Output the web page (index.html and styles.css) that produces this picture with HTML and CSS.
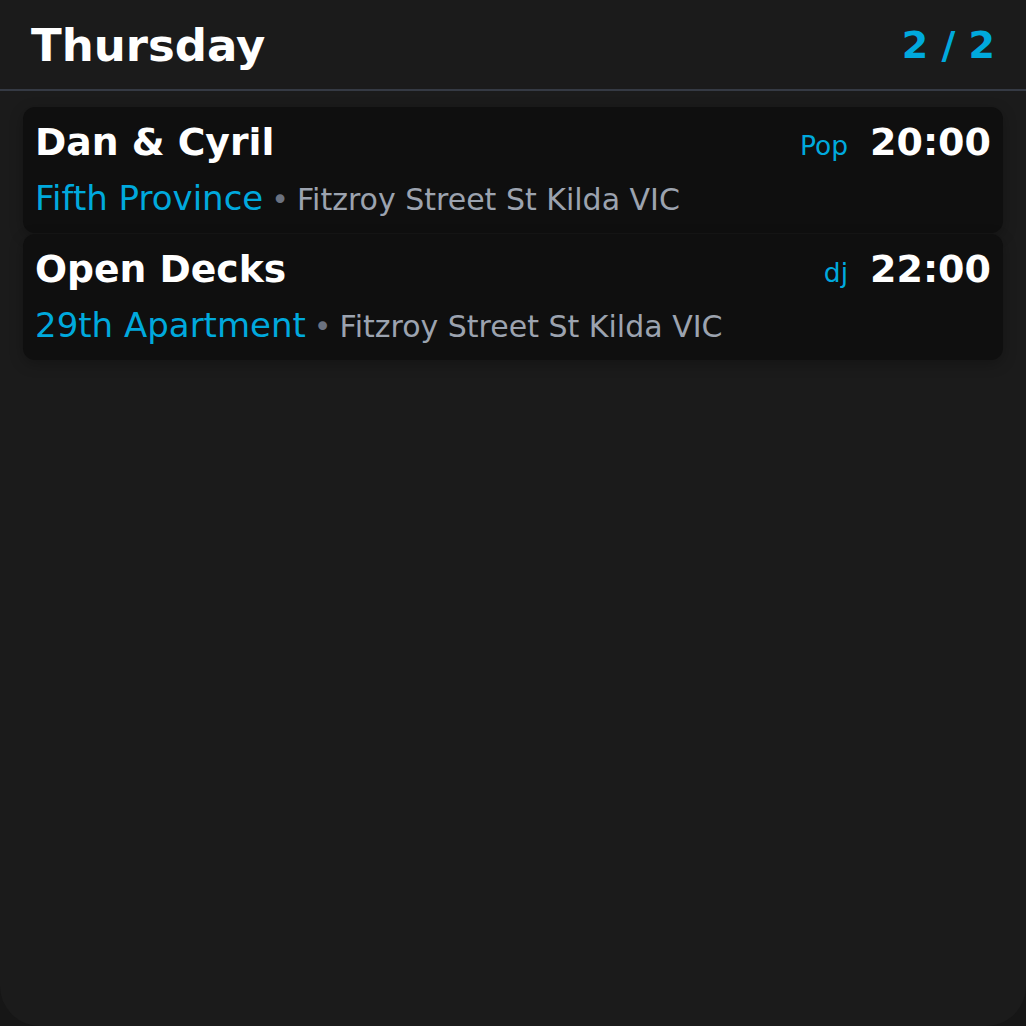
FILE: index.html
```html
<!DOCTYPE html>
<html lang="en">
<head>
<meta charset="utf-8">
<title>Thursday</title>
<link rel="stylesheet" href="styles.css">
</head>
<body>
<div class="screen">
  <header class="header">
    <h1 class="day">Thursday</h1>
    <div class="pager">2 / 2</div>
  </header>
  <main class="list">
    <article class="card">
      <div class="row-top">
        <div class="title">Dan &amp; Cyril</div>
        <div class="meta">
          <span class="genre">Pop</span>
          <span class="time">20:00</span>
        </div>
      </div>
      <div class="row-bottom">
        <span class="venue">Fifth Province</span>
        <span class="dot">•</span>
        <span class="address">Fitzroy Street St Kilda VIC</span>
      </div>
    </article>
    <article class="card">
      <div class="row-top">
        <div class="title">Open Decks</div>
        <div class="meta">
          <span class="genre">dj</span>
          <span class="time">22:00</span>
        </div>
      </div>
      <div class="row-bottom">
        <span class="venue">29th Apartment</span>
        <span class="dot">•</span>
        <span class="address">Fitzroy Street St Kilda VIC</span>
      </div>
    </article>
  </main>
</div>
</body>
</html>
```
FILE: styles.css
```css
* { box-sizing: border-box; }
html, body {
  margin: 0;
  padding: 0;
  background: #161616;
  font-family: "DejaVu Sans", "Liberation Sans", sans-serif;
}
.screen {
  width: 1026px;
  height: 1026px;
  background: #1b1b1b;
  border-radius: 0 0 40px 40px;
  overflow: hidden;
}
.header {
  height: 91px;
  display: flex;
  align-items: flex-start;
  justify-content: space-between;
  padding: 19px 31px 0 31px;
  border-bottom: 2px solid #353a44;
}
.day {
  margin: 0;
  font-size: 45px;
  font-weight: bold;
  color: #ffffff;
  line-height: 54px;
}
.pager {
  margin-top: 3px;
  font-size: 38px;
  font-weight: bold;
  color: #00a9dd;
  line-height: 46px;
}
.list {
  padding: 16px 23px;
  display: flex;
  flex-direction: column;
  gap: 1px;
}
.card {
  height: 126px;
  background: #0f0f0f;
  border-radius: 12px;
  padding: 13px 12px 0 12px;
  box-shadow: 0 4px 14px rgba(0, 0, 0, 0.25);
  display: flex;
  flex-direction: column;
  gap: 10px;
}
.row-top {
  display: flex;
  justify-content: space-between;
  align-items: baseline;
  line-height: 44px;
}
.title {
  font-size: 37.7px;
  font-weight: bold;
  color: #ffffff;
}
.meta {
  display: flex;
  align-items: baseline;
  gap: 22px;
}
.genre {
  font-size: 26.5px;
  color: #00a9dd;
}
.time {
  font-size: 38px;
  font-weight: bold;
  color: #ffffff;
}
.row-bottom {
  display: flex;
  align-items: baseline;
  gap: 8px;
  line-height: 40px;
}
.venue {
  font-size: 34px;
  color: #00a9dd;
}
.dot {
  font-size: 30px;
  color: #6b7280;
}
.address {
  font-size: 30px;
  color: #9ca3af;
}
```
